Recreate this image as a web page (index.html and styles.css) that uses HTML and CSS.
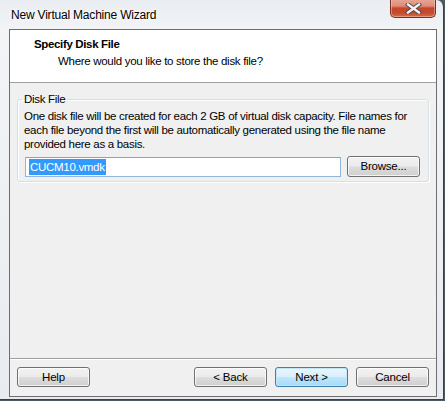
FILE: index.html
```html
<!DOCTYPE html>
<html>
<head>
<meta charset="utf-8">
<link rel="stylesheet" href="styles.css">
</head>
<body>
<div class="window">
  <div class="titlebar">
    <span class="title">New Virtual Machine Wizard</span>
    <button class="close" aria-label="Close">
      <svg width="17" height="11" viewBox="0 0 17 11">
        <path d="M3 1.5 L14 9.5 M14 1.5 L3 9.5" stroke="#4a4a4a" stroke-width="4.2" stroke-linecap="square" fill="none"/>
        <path d="M3 1.5 L14 9.5 M14 1.5 L3 9.5" stroke="#f4f4f4" stroke-width="2.4" stroke-linecap="square" fill="none"/>
      </svg>
    </button>
  </div>
  <div class="client">
    <div class="header">
      <div class="h-title">Specify Disk File</div>
      <div class="h-sub">Where would you like to store the disk file?</div>
    </div>
    <div class="content">
      <fieldset class="group">
        <legend>Disk File</legend>
        <p class="desc">One disk file will be created for each 2 GB of virtual disk capacity. File names for<br>each file beyond the first will be automatically generated using the file name<br>provided here as a basis.</p>
        <div class="file-row">
          <div class="textbox"><span class="sel">CUCM10.vmdk</span></div>
          <button class="btn">Browse...</button>
        </div>
      </fieldset>
    </div>
    <div class="footer">
      <button class="btn">Help</button>
      <div class="spacer"></div>
      <button class="btn">&lt; Back</button>
      <button class="btn default">Next &gt;</button>
      <button class="btn">Cancel</button>
    </div>
  </div>
</div>
</body>
</html>
```

FILE: styles.css
```css
html, body {
  margin: 0;
  padding: 0;
}
body {
  width: 445px;
  height: 401px;
  background: #4e5965;
  overflow: hidden;
  font-family: "Liberation Sans", Arial, sans-serif;
  font-size: 11.5px;
  letter-spacing: -0.3px;
  color: #000;
}
.window {
  box-sizing: border-box;
  width: 444px;
  height: 400px;
  padding-left: 9px;
  border-right: 1px solid #3a3f45;
  border-bottom: 1px solid #3a3f45;
  border-top-right-radius: 7px;
  background: linear-gradient(to bottom, #e9edf1 0px, #f2f4f6 30px, #eef1f4 200px, #e8ebef 400px);
  display: flex;
  flex-direction: column;
}
.titlebar {
  height: 29px;
  display: flex;
  align-items: flex-start;
  justify-content: space-between;
  margin-left: -9px;
  padding-left: 11px;
  padding-right: 7px;
}
.title {
  margin-top: 8px;
  line-height: 15px;
  font-size: 12px;
  letter-spacing: -0.2px;
  color: #000;
  text-shadow: 0 0 6px #fff, 0 0 3px #fff;
}
.close {
  box-sizing: border-box;
  width: 46px;
  height: 19px;
  margin-top: -1px;
  padding: 0;
  border: 1px solid #7b2f24;
  border-top: none;
  border-radius: 0 0 5px 5px;
  background: linear-gradient(to bottom, #e9a999 0%, #dd8b75 40%, #c7462b 50%, #c44a2e 75%, #d76b4a 100%);
  box-shadow: inset 0 0 0 1px rgba(255, 210, 195, 0.45);
  display: flex;
  align-items: center;
  justify-content: center;
}
.close svg {
  display: block;
  margin-top: 1px;
}
.client {
  box-sizing: border-box;
  width: 428px;
  height: 368px;
  border: 1px solid #6e6e6e;
  background: #f0f0f0;
  display: flex;
  flex-direction: column;
}
.header {
  box-sizing: border-box;
  height: 53px;
  background: #fff;
  border-bottom: 1px solid #a0a0a0;
  padding-top: 7px;
  line-height: 15px;
}
.h-title {
  font-weight: bold;
  padding-left: 24px;
  letter-spacing: -0.35px;
}
.h-sub {
  padding-left: 48px;
  margin-top: 2px;
}
.content {
  flex: 1;
  padding: 9px 7px 0 7px;
}
.group {
  margin: 0;
  padding: 1px 8px 4px 6px;
  border: 1px solid #d5dfe5;
  border-radius: 3px;
  box-shadow: inset 1px 1px 0 #fff, 1px 1px 0 #fff;
}
.group legend {
  padding: 0 2px;
  margin-left: -2px;
  line-height: 15px;
}
.desc {
  margin: 1px 0 5px 0;
  line-height: 14px;
  white-space: nowrap;
}
.file-row {
  display: flex;
  align-items: center;
  gap: 6px;
}
.textbox {
  box-sizing: border-box;
  width: 316px;
  height: 20px;
  margin-left: 1px;
  border: 1px solid #8fb6de;
  border-top-color: #7fa6d3;
  background: #fff;
  padding: 1px 0 0 3px;
  line-height: 16px;
}
.sel {
  display: inline-block;
  background: #3399ff;
  color: #fff;
  padding: 0 1px;
  line-height: 16px;
  font-size: 11.5px;
  letter-spacing: -0.3px;
}
.btn {
  box-sizing: border-box;
  width: 73px;
  height: 21px;
  padding: 0;
  border: 1px solid #707070;
  border-radius: 3px;
  background: linear-gradient(to bottom, #f2f2f2 0%, #ebebeb 48%, #dddddd 52%, #cfcfcf 100%);
  box-shadow: inset 0 0 0 1px rgba(255, 255, 255, 0.75);
  font-family: "Liberation Sans", Arial, sans-serif;
  font-size: 11.5px;
  color: #000;
  line-height: 17px;
  letter-spacing: -0.2px;
}
.btn.default {
  border-color: #3c7fb1;
  background: linear-gradient(to bottom, #eaf6fd 0%, #d9f0fc 48%, #bee6fd 52%, #a7d9f5 100%);
  box-shadow: inset 0 0 0 1px #c4e5f6;
}
.footer {
  box-sizing: border-box;
  height: 38px;
  border-top: 1px solid #a0a0a0;
  box-shadow: inset 0 1px 0 #fff;
  display: flex;
  align-items: flex-start;
  gap: 8px;
  padding: 8px 7px 0 7px;
}
.footer .btn {
  height: 20px;
  line-height: 16px;
}
.footer .spacer {
  flex: 1;
}
```
